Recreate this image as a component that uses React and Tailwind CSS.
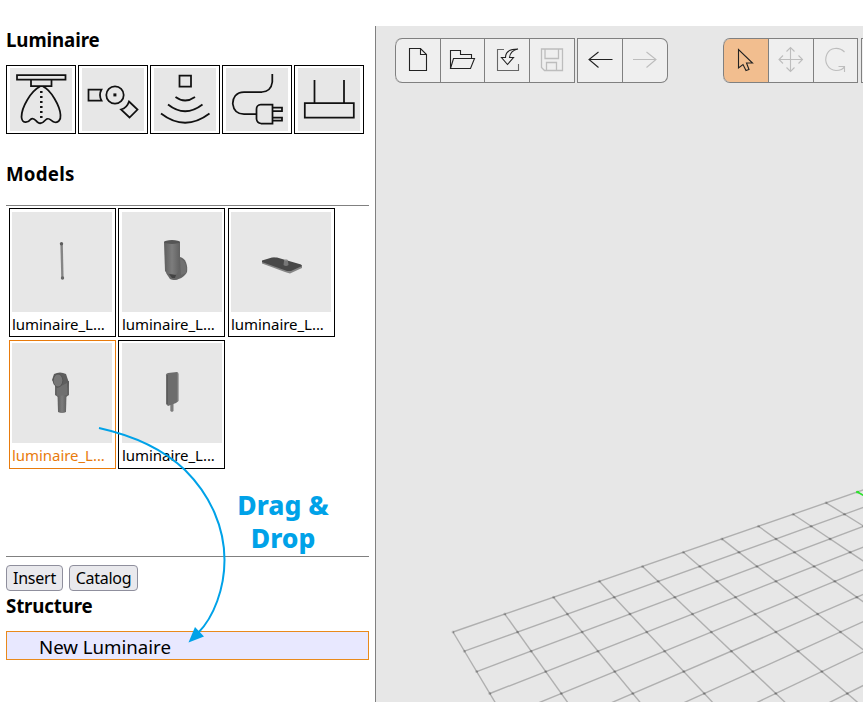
import React from "react";

const SANS = "font-['Noto_Sans','Open_Sans',sans-serif]";

const project = (i, j) => {
  const w = 1 + 0.03226 * (i - j);
  return [(453 + 68.11 * i - 3.53 * j) / w, (632 + 1.87 * (i - j)) / w];
};

const gridLines = [];
for (let n = 0; n <= 20; n++) {
  gridLines.push([project(n, 0), project(n, 20)]);
  gridLines.push([project(0, n), project(20, n)]);
}

const gridNodes = [];
for (let i = 0; i <= 14; i++) {
  for (let j = 0; j <= 12; j++) gridNodes.push(project(i, j));
}

function Floor() {
  const [gx, gy] = project(10, 0);
  const [hx, hy] = project(10, 2);
  return (
    <svg className="block w-full flex-1" viewBox="376 83 487 619" fill="none">
      <g stroke="#000" strokeOpacity="0.24" strokeWidth="1.4">
        {gridLines.map(([a, b], k) => (
          <line key={k} x1={a[0]} y1={a[1]} x2={b[0]} y2={b[1]} />
        ))}
      </g>
      <g fill="#000" fillOpacity="0.16">
        {gridNodes.map(([x, y], k) => (
          <circle key={k} cx={x} cy={y} r="1.5" />
        ))}
      </g>
      <path d={`M${gx} ${gy}L${hx} ${hy}`} stroke="#2be62b" strokeWidth="1.5" />
      <rect x={gx - 1.2} y={gy - 1} width="2.6" height="2.2" fill="#2be62b" />
    </svg>
  );
}

const tools = [
  {
    box: "10 68 62 63",
    art: (
      <>
        <path d="M17 75H65.500V79.500H17ZM31 79.500H51.500V86H31Z" />
        <path d="M40 86.500C31 91 21.500 107 21.500 117C22 124 28 123 30.500 119.500C34 116.500 36 121.500 38 122.500C41 124.500 43 123 45.500 120C49 116.500 51 121 54 122C58 123.500 61 120 60.500 115C60 106 51 90 43 86.500" />
        <path d="M41.300 91V118" strokeDasharray="2 3" strokeWidth="2.500" />
      </>
    ),
  },
  {
    box: "82 68 62 63",
    art: (
      <>
        <path d="M88.500 89.500H101.500Q98.500 95 101.500 100.500H88.500Z" />
        <circle cx="115" cy="95" r="8.700" />
        <path d="M113.400 93.400h3v3h-3z" fill="#111" stroke="none" />
        <path d="M129 101.500L137.500 109.500L129.500 117.500L121 109.500Q127 108 129 101.500Z" />
      </>
    ),
  },
  {
    box: "154 68 62 63",
    art: (
      <>
        <path d="M179.500 75.500H191V86.500H179.500Z" />
        <path d="M175.500 97Q185 104 195 97M168 104.500Q185 118 202.500 104.500M161 113.500Q185 132 209.500 113.500" />
      </>
    ),
  },
  {
    box: "226 68 62 63",
    art: (
      <>
        <path d="M272.300 74V82Q271 91.500 262 92H244C236 92 232.500 98 232.800 104Q234 114 244 114.200H256" />
        <path d="M272.500 104.500H261Q256.500 105 256.500 109V119Q257 123 261 123.500H272.500ZM272.500 107.500H282V111H272.500M272.500 117.500H282V120.500H272.500" />
      </>
    ),
  },
  {
    box: "298 68 62 63",
    art: <path d="M304.800 103H353.800V117.500H304.800ZM314.500 80V103M344 80V103" />,
  },
];

const models = [
  {
    box: "12 212 100 100",
    art: (
      <>
        <path d="M60.300 243H62.800L63.600 279H61.300Z" fill="#858585" />
        <circle cx="61.500" cy="243.700" r="1.700" fill="#5e5e5e" />
        <circle cx="62.500" cy="278" r="1.700" fill="#686868" />
      </>
    ),
  },
  {
    box: "122 212 100 100",
    art: (
      <>
        <path d="M180 257C186 258 188 266 187 272C185 277 178 280 174 280L166 272Z" fill="#646464" />
        <path d="M180 258L181 275L186 273Q188 263 180 258Z" fill="#707070" />
        <path d="M164 242L165 271C168 276 174 278 178 272L180 268V242Z" fill="url(#steel)" />
        <ellipse cx="172" cy="242" rx="8" ry="1.900" fill="#555" />
        <path d="M166 273L170 279Q174 281 178 279L175 275Z" fill="#666" />
        <path d="M169 274L176 275L175 278H172Z" fill="#424242" />
      </>
    ),
  },
  {
    box: "231 212 100 100",
    art: (
      <>
        <path d="M262 261.500L274 257.500L302 265.500V268L290 273.500L285 272L262 263.500Z" fill="#858585" />
        <path d="M262 260.500L272 257.500H277L301 264.500L302 266L291 271H287L262 262Z" fill="#484848" />
        <path d="M284 261Q286 258.500 288 261L288.500 265Q286 267 283.500 265Z" fill="#777" />
        <ellipse cx="286" cy="260.300" rx="2" ry="0.800" fill="#8c8c8c" />
      </>
    ),
  },
  {
    box: "12 343 100 100",
    selected: true,
    art: (
      <>
        <path d="M55 383L60 384L65 381H69V395L66 397H58L55 395Z" fill="#646464" />
        <path d="M57.500 394H66.500L66 412Q62 414 58 412Z" fill="url(#steel)" />
        <path d="M54 374Q60 371 66 374L69 383L66 391L57 388L52 380Z" fill="#5e5e5e" />
        <path d="M57 388L67 383V395L57 396Z" fill="#707070" />
        <ellipse cx="58" cy="380.500" rx="4.800" ry="6.500" fill="#777" stroke="#505050" strokeWidth="0.800" />
      </>
    ),
  },
  {
    box: "122 343 100 100",
    art: (
      <>
        <path d="M170.300 402H173.500V411L172 412L170.300 411Z" fill="#7c7c7c" />
        <path d="M166 376Q165.500 373.500 168 373L177 372Q178.500 372.500 178.500 374V401L176 403L168 406L166 404Z" fill="#6d6d6d" />
        <path d="M167.500 375V404" stroke="#595959" strokeWidth="0.900" />
        <path d="M177.500 373V402" stroke="#858585" strokeWidth="0.700" />
      </>
    ),
  },
];

const fileTools = [
  {
    box: "396 39 44 43",
    w: "w-[45px]",
    art: <path d="M409.500 48.500H420.500L426.500 54.500V70.500H409.500ZM420.500 48.500V54.500H426.500" />,
  },
  {
    box: "441 39 43 43",
    w: "w-[44px]",
    art: <path d="M450.500 68.500V50.500H460.500V54.500H471.500V58M450.500 68.500L453.500 58.500H474.500L470.500 68.500Z" />,
  },
  {
    box: "485 39 44 43",
    w: "w-[45px]",
    art: (
      <>
        <path d="M504 49.500H497.500V70.500H518.500V64" stroke="#666" />
        <path d="M518 49C510 49 505.500 52 505.500 57.500H501.500L507.500 64.500L513.500 57.500H509.500C510 53 513 50 518 49Z" />
      </>
    ),
  },
  {
    box: "530 39 44 43",
    w: "w-[45px]",
    off: true,
    art: (
      <path d="M541.500 49H562.500V70.500H544.500L541.500 67.500ZM545 49V58.500H558.500V49M546.500 70.500V62.500H556.500V70.500" strokeWidth="1.300" />
    ),
  },
];
const historyTools = [
  { box: "578 39 44 43", w: "w-[45px]", art: <path d="M612.500 59.500H589M598.500 52L589 59.500L598.500 67.500" /> },
  { box: "623 39 44 43", w: "w-[45px]", off: true, art: <path d="M633 59.500H656M646.500 52L656 59.500L646.500 67.500" /> },
];
const editTools = [
  {
    box: "724 39 44 43",
    w: "w-[45px]",
    active: true,
    art: <path d="M738.500 49.500V68L743 64.500L746 70.500L749 69.500L746.500 63H752.500Z" />,
  },
  {
    box: "769 39 44 43",
    w: "w-[45px]",
    off: true,
    art: (
      <path d="M790.500 47.500V71.500M779 59.500H802.500M786.500 51.500L790.500 47.500L794.500 51.500M786.500 67.500L790.500 71.500L794.500 67.500M783 55.500L779 59.500L783 63.500M798.500 55.500L802.500 59.500L798.500 63.500" />
    ),
  },
  {
    box: "814 39 43 43",
    w: "w-[44px]",
    off: true,
    art: <path d="M844.500 52C839 46.500 830 47.500 827 54C823.500 62 828 70 836 70.500C840 70.500 843 69.500 844.500 66.500M838.500 66.500H844.500V72" />,
  },
];

function ToolGroup({ items, className }) {
  return (
    <div className={`flex h-[45px] shrink-0 overflow-hidden border border-l-0 border-[#808080] bg-[#efefef] ${className}`}>
      {items.map((t) => (
        <button key={t.box} className={`h-full shrink-0 border-l border-[#808080] first:rounded-l-[inherit] ${t.w} ${t.active ? "bg-[#f2be8f]" : ""}`}>
          <svg
            className="block h-full w-full"
            viewBox={t.box}
            fill="none"
            stroke={t.off ? "#bdbdbd" : "#222"}
            strokeWidth="1.1"
          >
            {t.art}
          </svg>
        </button>
      ))}
    </div>
  );
}

function Heading({ children, className }) {
  return <h2 className={`text-[18.7px] leading-6 font-bold whitespace-nowrap ${className}`}>{children}</h2>;
}

export default function App() {
  return (
    <div className={`relative h-[702px] w-[863px] overflow-hidden bg-white pt-[26px] text-black ${SANS}`}>
      <div className="flex h-[676px]">
        <aside className="flex w-[376px] shrink-0 flex-col border-r border-[#808080] pr-1.5 pl-1.5">
          <Heading className="mt-[2px] tracking-[-0.1px]">Luminaire</Heading>
          <div className="mt-[13px] flex gap-0.5">
            {tools.map((t) => (
              <button key={t.box} className="h-[69px] w-[70px] border border-black px-[3px] py-[2px]">
                <svg className="block h-[63px] w-[62px] bg-[#e7e7e7]" viewBox={t.box} preserveAspectRatio="xMidYMid meet" fill="none" stroke="#111" strokeWidth="1.75">
                  {t.art}
                </svg>
              </button>
            ))}
          </div>
          <Heading className="mt-[28px] tracking-[0.25px]">Models</Heading>
          <div className="mt-[19px] h-[352px] border-y border-[#808080] pt-[2px] pl-[3px]">
            <div className="grid grid-cols-[109px_110px_107px] gap-y-[3px]">
              {models.map((m, i) => (
                <div
                  key={m.box}
                  className={`h-[129px] w-[107px] border ${i === 1 || i === 4 ? "pl-[3px]" : "pl-[2px]"} ${i < 3 ? "pt-[3px]" : "pt-[2px]"} ${
                    m.selected ? "border-[#e87b0c] text-[#e87b0c]" : "border-black"
                  }`}
                >
                  <svg className="block h-[100px] w-[100px] bg-[#e7e7e7]" viewBox={m.box}>
                    <defs>
                      <linearGradient id="steel">
                        <stop offset="0" stopColor="#5e5e5e" />
                        <stop offset="0.5" stopColor="#7d7d7d" />
                        <stop offset="1" stopColor="#606060" />
                      </linearGradient>
                    </defs>
                    {m.art}
                  </svg>
                  <div className="mt-[2px] text-[15px] leading-[21px] tracking-[-0.05px] whitespace-nowrap">luminaire_L...</div>
                </div>
              ))}
            </div>
          </div>
          <div className="mt-2 flex gap-1.5 text-[16px]">
            <button className="h-[26px] w-[57px] rounded-[4px] border border-[#8f8f9d] bg-[#e9e9ed] leading-[25px] tracking-[-0.2px]">Insert</button>
            <button className="h-[26px] w-[69px] rounded-[4px] border border-[#8f8f9d] bg-[#e9e9ed] leading-[25px] tracking-[-0.3px]">Catalog</button>
          </div>
          <Heading className="mt-[3px] tracking-[-0.15px]">Structure</Heading>
          <div className="mt-[13px] h-[29px] border border-[#e98a1c] bg-[#e8e8ff] pl-[32px] text-[18.7px] leading-[30px] tracking-[-0.03px] whitespace-nowrap">
            New Luminaire
          </div>
        </aside>
        <main className="flex min-w-0 flex-1 flex-col overflow-hidden bg-[#e7e7e7]">
          <div className="flex pt-3 pl-[19px]">
            <ToolGroup items={fileTools} className="rounded-l-[7px]" />
            <ToolGroup items={historyTools} className="ml-[2px] rounded-r-[7px]" />
            <ToolGroup items={editTools} className="ml-[55px] rounded-l-[7px]" />
            <div className="ml-[3px] h-[45px] w-[45px] shrink-0 border border-[#808080] bg-[#efefef]" />
          </div>
          <Floor />
        </main>
      </div>
      <svg className="absolute top-[420px] left-[90px] h-[230px] w-[150px]" viewBox="90 420 150 230" fill="none">
        <path d="M99 428C135 436 163 449 185 470C211 496 224.500 528 224.500 560C224.500 588 214 617 198 633" stroke="#00a2e8" strokeWidth="2" />
        <path d="M188.500 642.500L195 627L204 636.500Z" fill="#00a2e8" />
      </svg>
      <div className="absolute top-[489px] left-[223px] w-[120px] text-center text-[26.5px] leading-[33px] font-extrabold text-[#00a2e8]">
        Drag &amp;
        <br />
        Drop
      </div>
    </div>
  );
}
